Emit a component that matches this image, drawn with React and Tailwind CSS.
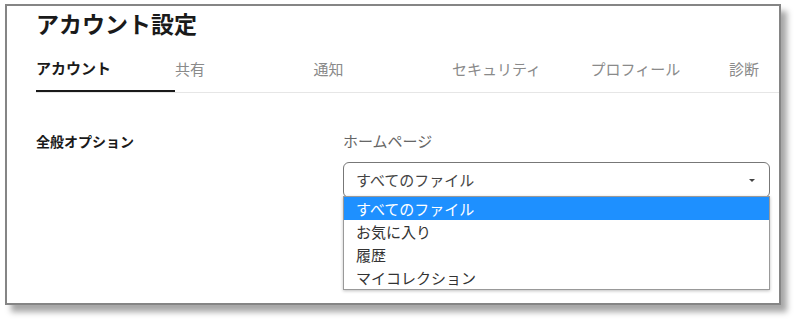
import React from 'react';

const tabs = ['アカウント', '共有', '通知', 'セキュリティ', 'プロフィール', '診断'];
const options = ['すべてのファイル', 'お気に入り', '履歴', 'マイコレクション'];

const font = { fontFamily: '"Noto Sans CJK JP", "Noto Sans", sans-serif' };

const App = () => {
  return (
    <div className="w-[794px] h-[319px] bg-white pt-[4px] pl-[5px]" style={font}>
      <div className="w-[776px] h-[301px] border-2 border-[#858585] bg-white shadow-[6px_7px_6px_rgba(0,0,0,0.35)] overflow-hidden">
        <div className="pl-[29px]">
          <h1 className="text-[23px] leading-[30px] font-bold text-[#1a1a1a] pt-[2px]">アカウント設定</h1>

          <div className="flex mt-[8px] border-b border-[#e6e6e6]">
            {tabs.map((t, i) => (
              <div
                key={t}
                className={
                  i === 0
                    ? 'w-[139px] shrink-0 h-[46px] flex items-center text-[15px] font-bold text-[#1a1a1a] border-b-2 border-[#1a1a1a] -mb-px'
                    : 'w-[138.5px] shrink-0 h-[46px] flex items-center text-[15px] text-[#8a8a8a]'
                }
              >
                {t}
              </div>
            ))}
          </div>

          <div className="flex mt-[38px]">
            <div className="w-[307px] text-[14px] leading-[20px] font-bold text-[#1a1a1a]">全般オプション</div>
            <div className="w-[427px]">
              <div className="text-[15px] leading-[20px] text-[#666]">ホームページ</div>
              <div className="relative mt-[11px]">
                <div className="h-[36px] border border-[#777] rounded-[6px] flex items-center justify-between pl-[12px] pr-[12px] text-[15px] text-[#444]">
                  <span>すべてのファイル</span>
                  <svg width="8" height="5" viewBox="0 0 8 5" className="mr-[1px]">
                    <path d="M1 1h6L4 4z" fill="#444" />
                  </svg>
                </div>
                <div className="absolute left-0 top-[34px] w-full bg-white border border-[#999] shadow-[0_1px_3px_rgba(0,0,0,0.25)]">
                  {options.map((o, i) => (
                    <div
                      key={o}
                      className={
                        i === 0
                          ? 'h-[23px] leading-[23px] pl-[12px] text-[15px] bg-[#1e90ff] text-white'
                          : 'h-[23px] leading-[23px] pl-[12px] text-[15px] text-[#333]'
                      }
                    >
                      {o}
                    </div>
                  ))}
                </div>
              </div>
            </div>
          </div>
        </div>
      </div>
    </div>
  );
};

export default App;
